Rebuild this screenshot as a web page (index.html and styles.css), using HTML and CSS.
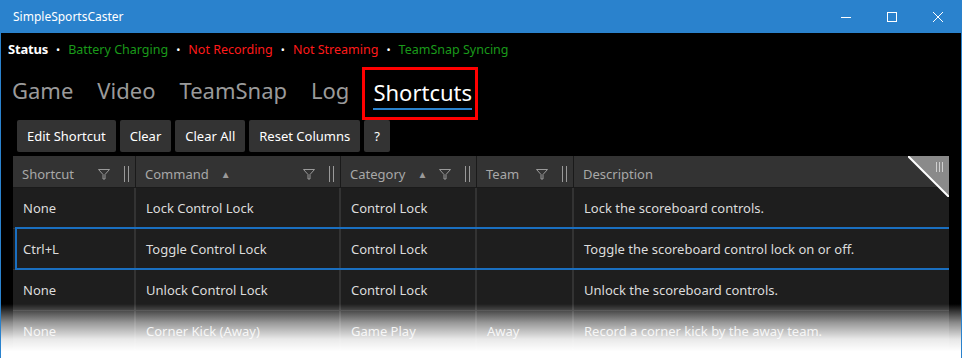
FILE: index.html
```html
<!DOCTYPE html>
<html lang="en">
<head>
    <meta charset="UTF-8">
    <title>SimpleSportsCaster</title>
    <link rel="stylesheet" href="styles.css">
</head>
<body>
    <div class="window">
        <div class="titlebar">
            <span class="title">SimpleSportsCaster</span>
            <div class="controls">
                <svg width="46" height="33" viewBox="0 0 46 33"><line x1="18" y1="17.5" x2="28" y2="17.5" stroke="#fff" stroke-width="1"/></svg>
                <svg width="46" height="33" viewBox="0 0 46 33"><rect x="18.5" y="12.5" width="9" height="9" fill="none" stroke="#fff" stroke-width="1"/></svg>
                <svg width="46" height="33" viewBox="0 0 46 33"><path d="M18 12 L28 22 M28 12 L18 22" stroke="#fff" stroke-width="1"/></svg>
            </div>
        </div>

        <div class="content">
            <div class="status">
                <b>Status</b>
                <span class="dot">&bull;</span> <span class="ok">Battery Charging</span>
                <span class="dot">&bull;</span> <span class="bad">Not Recording</span>
                <span class="dot">&bull;</span> <span class="bad">Not Streaming</span>
                <span class="dot">&bull;</span> <span class="ok">TeamSnap Syncing</span>
            </div>

            <nav class="tabs">
                <span class="tab">Game</span>
                <span class="tab">Video</span>
                <span class="tab">TeamSnap</span>
                <span class="tab">Log</span>
                <span class="tab active"><span class="label">Shortcuts</span></span>
            </nav>

            <div class="toolbar">
                <button>Edit Shortcut</button>
                <button>Clear</button>
                <button>Clear All</button>
                <button>Reset Columns</button>
                <button>?</button>
            </div>

            <div class="grid">
                <div class="row head">
                    <div class="cell"><span class="name">Shortcut</span><span class="tools"><svg class="filter" width="12" height="12" viewBox="0 0 12 12"><path d="M0.5 1.5 H11.5 L7 6.5 V11 H5 V6.5 Z" fill="none" stroke="#9a9a9a"/></svg><span class="grip"></span></span></div>
                    <div class="cell"><span class="name">Command</span><span class="sort">&#9650;</span><span class="tools"><svg class="filter" width="12" height="12" viewBox="0 0 12 12"><path d="M0.5 1.5 H11.5 L7 6.5 V11 H5 V6.5 Z" fill="none" stroke="#9a9a9a"/></svg><span class="grip"></span></span></div>
                    <div class="cell"><span class="name">Category</span><span class="sort">&#9650;</span><span class="tools"><svg class="filter" width="12" height="12" viewBox="0 0 12 12"><path d="M0.5 1.5 H11.5 L7 6.5 V11 H5 V6.5 Z" fill="none" stroke="#9a9a9a"/></svg><span class="grip"></span></span></div>
                    <div class="cell"><span class="name">Team</span><span class="tools"><svg class="filter" width="12" height="12" viewBox="0 0 12 12"><path d="M0.5 1.5 H11.5 L7 6.5 V11 H5 V6.5 Z" fill="none" stroke="#9a9a9a"/></svg><span class="grip"></span></span></div>
                    <div class="cell"><span class="name">Description</span></div>
                    <svg class="corner" width="41" height="41" viewBox="0 0 41 41">
                        <path d="M0 0 H41 V41 Z" fill="#8a8a8a"/>
                        <path d="M0 0 L41 41" stroke="#fff" stroke-width="2"/>
                        <path d="M28.5 6 V16 M31.5 6 V16 M34.5 6 V16" stroke="#d0d0d0" stroke-width="1"/>
                    </svg>
                </div>
                <div class="row">
                    <div class="cell">None</div>
                    <div class="cell">Lock Control Lock</div>
                    <div class="cell">Control Lock</div>
                    <div class="cell"></div>
                    <div class="cell">Lock the scoreboard controls.</div>
                </div>
                <div class="row selected">
                    <div class="cell">Ctrl+L</div>
                    <div class="cell">Toggle Control Lock</div>
                    <div class="cell">Control Lock</div>
                    <div class="cell"></div>
                    <div class="cell">Toggle the scoreboard control lock on or off.</div>
                </div>
                <div class="row">
                    <div class="cell">None</div>
                    <div class="cell">Unlock Control Lock</div>
                    <div class="cell">Control Lock</div>
                    <div class="cell"></div>
                    <div class="cell">Unlock the scoreboard controls.</div>
                </div>
                <div class="row">
                    <div class="cell">None</div>
                    <div class="cell">Corner Kick (Away)</div>
                    <div class="cell">Game Play</div>
                    <div class="cell">Away</div>
                    <div class="cell">Record a corner kick by the away team.</div>
                </div>
            </div>
        </div>

        <div class="fade"></div>
    </div>
</body>
</html>
```

FILE: styles.css
```css
body {
    margin: 0;
    background: #fff;
    font-family: "Noto Sans", "Open Sans", sans-serif;
    overflow: hidden;
}

.window {
    position: relative;
    width: 962px;
    height: 358px;
    box-sizing: border-box;
    background: #000;
    border-left: 1px solid #2a82cd;
    border-right: 1px solid #2a82cd;
    overflow: hidden;
}

.titlebar {
    height: 33px;
    background: #2a82cd;
    display: flex;
    align-items: center;
    justify-content: space-between;
    color: #fff;
}

.title {
    font-size: 12px;
    padding-left: 12px;
    padding-bottom: 1px;
}

.controls {
    display: flex;
    align-self: stretch;
}

.controls svg {
    display: block;
}

.content {
    padding: 0 12px 0 12px;
}

.status {
    height: 32px;
    display: flex;
    align-items: center;
    gap: 0 8px;
    margin-left: -5px;
    font-size: 12.5px;
    white-space: nowrap;
}

.status b {
    color: #fff;
    font-weight: 700;
    font-size: 13px;
    letter-spacing: -0.2px;
}

.dot {
    color: #fff;
    font-size: 11px;
}

.ok {
    color: #1a9a1a;
}

.bad {
    color: #ff1a1a;
}

.tabs {
    display: flex;
    align-items: flex-start;
    gap: 24px;
    height: 55px;
    margin-left: -1px;
}

.tab {
    font-size: 22px;
    color: #9a9a9a;
    line-height: 1;
    padding-top: 14px;
}

.tab.active {
    color: #fff;
    margin-left: -11px;
    padding: 11px 3px 7px 8px;
    margin-top: 2px;
    outline: 3px solid #ff0000;
    outline-offset: -3px;
    border: 3px solid transparent;
}

.tab.active .label {
    display: inline-block;
    padding-bottom: 5px;
    border-bottom: 2px solid #2a82cd;
}

.toolbar {
    display: flex;
    gap: 4px;
    margin-left: 4px;
    height: 36px;
}

button {
    height: 32px;
    margin: 0;
    padding: 0 10px;
    border: none;
    border-radius: 2px;
    background: #333;
    color: #fff;
    font-family: inherit;
    font-size: 13px;
}

.grid {
    width: 936px;
    background: #1e1e1e;
    font-size: 13px;
    color: #dcdcdc;
}

.row {
    position: relative;
    display: grid;
    grid-template-columns: 123px 205px 136px 97px 375px;
    height: 41px;
    border-bottom: 1px solid #333;
    box-sizing: border-box;
}

.cell {
    display: flex;
    align-items: center;
    padding-left: 10px;
    border-right: 2px solid #333;
    white-space: nowrap;
    overflow: hidden;
}

.cell:last-child {
    border-right: none;
}

.row.head {
    height: 32px;
    background: #333;
    color: #a8a8a8;
    border-bottom: 1px solid #1a1a1a;
}

.head .cell {
    border-right: 1px solid #1a1a1a;
    padding-left: 9px;
    padding-top: 4px;
}

.sort {
    font-size: 10px;
    color: #9a9a9a;
    margin-left: 12px;
}

.tools {
    margin-left: auto;
    display: flex;
    align-items: center;
    gap: 14px;
    padding-right: 6px;
}

.filter {
    display: block;
}

.grip {
    width: 3px;
    height: 16px;
    border-left: 1px solid #9a9a9a;
    border-right: 1px solid #9a9a9a;
}

.corner {
    position: absolute;
    right: 0;
    top: 0;
}

.row.selected::after {
    content: "";
    position: absolute;
    left: 2px;
    right: 0;
    top: -2px;
    bottom: -1px;
    border: 2px solid #1a6fc0;
    border-right: none;
}

.fade {
    position: absolute;
    left: 0;
    right: 0;
    bottom: 0;
    height: 54px;
    background: linear-gradient(to bottom, rgba(255,255,255,0) 0%, rgba(255,255,255,0.55) 35%, rgba(255,255,255,0.9) 65%, #fff 88%);
}
```
